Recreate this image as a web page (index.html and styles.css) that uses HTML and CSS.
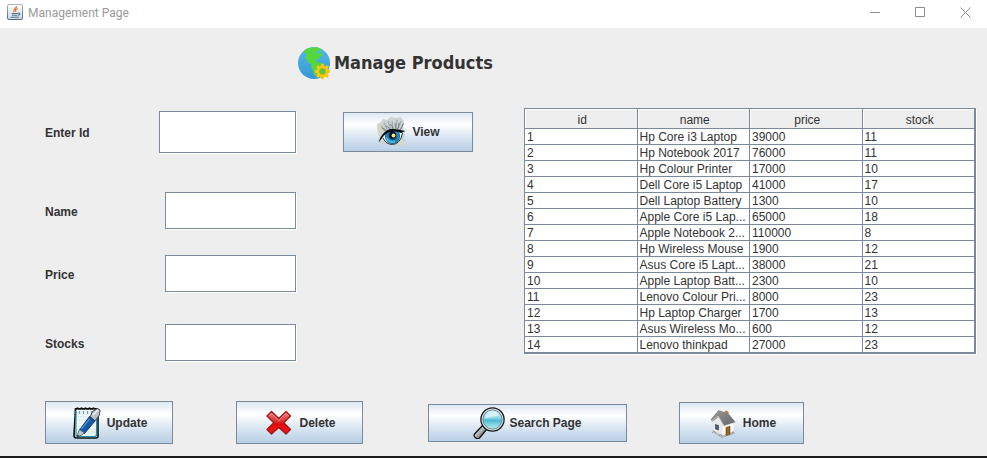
FILE: index.html
```html
<!DOCTYPE html>
<html lang="en">
<head>
<meta charset="utf-8">
<title>Management Page</title>
<link rel="stylesheet" href="styles.css">
</head>
<body>
<div class="window">
  <header class="titlebar">
    <svg class="app-icon" viewBox="0 0 16 16" aria-hidden="true">
      <defs>
        <linearGradient id="java-bg" x1="0" y1="0" x2="0" y2="1"><stop offset="0" stop-color="#fff"/><stop offset="1" stop-color="#cfd8e0"/></linearGradient>
        <linearGradient id="java-edge" x1="0" y1="0" x2="0" y2="1"><stop offset="0" stop-color="#a9b4bf"/><stop offset="1" stop-color="#4d6b82"/></linearGradient>
      </defs>
      <rect x="0.5" y="0.5" width="15" height="15" rx="1.5" fill="url(#java-bg)" stroke="url(#java-edge)"/>
      <path d="M9.500 2.200C10 4.500 5.500 5 7 8.300M10.500 4.500C8.500 5.500 8 6.500 9 8" fill="none" stroke="#e8762c" stroke-width="1.300"/>
      <path d="M4.500 9.500h6.500M5 11.200h5.500M3.500 13.200h8.500M11 9.300c2.500-.8 2.500 1.700 0 2" fill="none" stroke="#4f7695" stroke-width="1.100"/>
    </svg>
    <span class="titlebar-text">Management Page</span>
    <div class="window-controls">
      <button type="button" aria-label="Minimize"><svg viewBox="0 0 11 11"><path d="M0 5.500h10"/></svg></button>
      <button type="button" aria-label="Maximize"><svg viewBox="0 0 11 11"><path d="M.5 .5h9v9h-9z"/></svg></button>
      <button type="button" aria-label="Close"><svg viewBox="0 0 11 11"><path d="M.5 .5l10 10M10.500 .5l-10 10"/></svg></button>
    </div>
  </header>

  <h1 class="heading">
    <svg class="icon" viewBox="0 0 32 32" aria-hidden="true">
      <defs>
        <linearGradient id="sea" x1="0" y1="0" x2="0" y2="1"><stop offset="0" stop-color="#55b9e9"/><stop offset="1" stop-color="#3498d4"/></linearGradient>
      </defs>
      <circle cx="16" cy="16" r="16" fill="url(#sea)"/>
      <path d="M7 2.800C11 .4 17-.6 22 1.300l1.500 2.500-2.500.7 2.500 1.500 1.500 2.500-3 1.200-1.300 2.300-3 .8 1.300 2 4 1 2.500 3-1.500 3-2.500 3.500-2.500 3.700-3-1-1-4.500-2-3 .5-3.500-3.500-1.500-2.500-4.500 1-4-3-2.200z" fill="#54d63c"/>
      <path d="M19 3l3 3-2 1.500-2.500-2.500z" fill="#4bb9d6"/>
      <g fill="#f6c713">
        <circle cx="24.500" cy="24.500" r="5.900"/>
        <path d="M23 16.800h3v15.400h-3zM16.800 23v3h15.400v-3z"/>
        <path d="M23 16.800h3v15.400h-3zM16.800 23v3h15.400v-3z" transform="rotate(45 24.500 24.500)"/>
      </g>
      <circle cx="24.500" cy="24.500" r="3.400" fill="#e4a80c"/>
      <circle cx="24.500" cy="24.500" r="2.800" fill="#4dcc45"/>
    </svg>
    Manage Products
  </h1>

  <main class="content">
    <form class="form" id="product-form">
      <div class="field field-id"><label for="pid">Enter Id</label><input id="pid" type="text"></div>
      <div class="field field-name"><label for="pname">Name</label><input id="pname" type="text"></div>
      <div class="field field-price"><label for="price">Price</label><input id="price" type="text"></div>
      <div class="field field-stocks"><label for="stocks">Stocks</label><input id="stocks" type="text"></div>
    </form>

    <button type="button" class="btn btn-view">
      <svg class="icon" viewBox="0 0 32 32" aria-hidden="true">
        <defs>
          <radialGradient id="iris"><stop offset="0" stop-color="#092238"/><stop offset=".35" stop-color="#0c4569"/><stop offset=".8" stop-color="#2496cf"/><stop offset="1" stop-color="#124a70"/></radialGradient>
        </defs>
        <path d="M1 8l4-2 2-3 4 1 4-3 5 1 5-1 3 4-1 6 2 5-1 5 2 4-3 2 1 2-4 1-3-1-3 1-3-1-5-1-4 1-4-4 1-4-1-6z" fill="#ccd3d3"/>
        <path d="M1 9l4-2 2 3-1 6-4 2z" fill="#d6d6c0"/>
        <path d="M22 27l4-3 3 2-4 3z" fill="#dcdccc"/>
        <path d="M5 10l5 6M8 7l4 8M12 5l3 8M16 5l1 8M21 4l-1 9M25 5l-3 8M28 7l-4 7" stroke="#a3adae" stroke-width="1.200" fill="none"/>
        <path d="M6 12q4 1 5 4M10 10q4 1 4 5M14 8q3 2 3 6M19 7q1 4 0 7M23 7q0 4-2 7M27 8q-1 4-4 7" stroke="#6c7879" stroke-width=".9" fill="none"/>
        <path d="M5 25Q10 14 18 14q7 0 8.500 4-1.500 10-9.500 10.500-7 0-9-5z" fill="#eef2f2"/>
        <circle cx="16.500" cy="20.500" r="7.500" fill="url(#iris)"/>
        <path d="M11 22q2 5 8 3.500" stroke="#3eb3e2" stroke-width="2.500" fill="none"/>
        <circle cx="16.500" cy="19" r="3.500" fill="#06121c"/>
        <circle cx="17.500" cy="19.500" r="1.900" fill="#ffe27a"/>
        <path d="M2.500 26.500l2-5Q8 14.500 15 13l7 .5 7 1.500-4 2-5-1.500-5 .3q-6 1-9 6.500z" fill="#050808"/>
        <path d="M7 22q3 6.500 9.500 6.500Q24.500 28 26.500 17" stroke="#263337" stroke-width="1" fill="none"/>
      </svg>
      View
    </button>

    <table class="products">
      <thead>
        <tr><th scope="col">id</th><th scope="col">name</th><th scope="col">price</th><th scope="col">stock</th></tr>
      </thead>
      <tbody>
        <tr><td>1</td><td>Hp Core i3 Laptop</td><td>39000</td><td>11</td></tr>
        <tr><td>2</td><td>Hp Notebook 2017</td><td>76000</td><td>11</td></tr>
        <tr><td>3</td><td>Hp Colour Printer</td><td>17000</td><td>10</td></tr>
        <tr><td>4</td><td>Dell Core i5 Laptop</td><td>41000</td><td>17</td></tr>
        <tr><td>5</td><td>Dell Laptop Battery</td><td>1300</td><td>10</td></tr>
        <tr><td>6</td><td>Apple Core i5 Lap...</td><td>65000</td><td>18</td></tr>
        <tr><td>7</td><td>Apple Notebook 2...</td><td>110000</td><td>8</td></tr>
        <tr><td>8</td><td>Hp Wireless Mouse</td><td>1900</td><td>12</td></tr>
        <tr><td>9</td><td>Asus Core i5 Lapt...</td><td>38000</td><td>21</td></tr>
        <tr><td>10</td><td>Apple Laptop Batt...</td><td>2300</td><td>10</td></tr>
        <tr><td>11</td><td>Lenovo Colour Pri...</td><td>8000</td><td>23</td></tr>
        <tr><td>12</td><td>Hp Laptop Charger</td><td>1700</td><td>13</td></tr>
        <tr><td>13</td><td>Asus Wireless Mo...</td><td>600</td><td>12</td></tr>
        <tr><td>14</td><td>Lenovo thinkpad</td><td>27000</td><td>23</td></tr>
      </tbody>
    </table>
  </main>

  <footer class="actions">
    <button type="button" class="btn btn-update">
      <svg class="icon" viewBox="0 0 32 32" aria-hidden="true">
        <defs>
          <linearGradient id="paper" x1="0" y1="0" x2="0" y2="1"><stop offset="0" stop-color="#e4f1f5"/><stop offset=".5" stop-color="#fff"/><stop offset="1" stop-color="#dcecea"/></linearGradient>
        </defs>
        <path d="M4.500 1.800h21q1.500 0 1.500 2V29q0 2-2 2H5.500Q3 31 3 28.500z" fill="url(#paper)" stroke="#111" stroke-width="1.600"/>
        <path d="M5 4v23.500q0 2 2 2h16.500q2 0 2-2V5" fill="none" stroke="#1d93ac" stroke-width="1.200"/>
        <path d="M7 10h17M7 13h17M7 16h17M7 19h17M7 22h17M7 25h17" stroke="#c8dcdd" stroke-width=".7"/>
        <path d="M5 2.500q1.500-3 3 0M9 2.500q1.500-3 3 0M13 2.500q1.500-3 3 0M17 2.500q1.500-3 3 0M21 2.500q1.500-3 3 0" fill="none" stroke="#111" stroke-width="1.400"/>
        <path d="M8.500 4v3M12.500 4v3M16.500 4v3M20.500 4v3" stroke="#8d9ba0" stroke-width="1.200"/>
        <path d="M21.500 4.500l5-3 2.500 1.500-.5 5-4.500 6-5-4z" fill="#b9bfc5" stroke="#3a4046" stroke-width=".9"/>
        <path d="M22 8l5-5" stroke="#f3f5f7" stroke-width="1.500"/>
        <path d="M18.500 9.500l5.500 4.500-10.500 12.500-5-3.500z" fill="#1559a6" stroke="#0b2c5a" stroke-width=".9"/>
        <path d="M18.500 12l-8 10" stroke="#4b92d5" stroke-width="1.300"/>
        <path d="M8.500 22.500l5 3.500-3 2-4 2 .5-4z" fill="#c4cbd0" stroke="#4b5358" stroke-width=".8"/>
        <path d="M6 30l.8-2.200 1.400 1.200z" fill="#111"/>
      </svg>
      Update
    </button>
    <button type="button" class="btn btn-delete">
      <svg class="icon" viewBox="0 0 32 32" aria-hidden="true">
        <defs>
          <linearGradient id="cross" x1="0" y1="0" x2="0" y2="1"><stop offset="0" stop-color="#f08080"/><stop offset=".45" stop-color="#d92f2f"/><stop offset=".55" stop-color="#e10d0d"/><stop offset="1" stop-color="#f01616"/></linearGradient>
        </defs>
        <path d="M8.500 4.500L15.800 11.500 23 4.500 27.500 9 20.800 15.800 27.500 22.500 23 27 15.800 20.500 8.500 27 4 22.500 10.800 15.800 4 9z" fill="url(#cross)" stroke="#9c1717" stroke-width="1.300" stroke-linejoin="round"/>
        <path d="M6 9l2.500-2.500 7.300 7 7.200-7L25.500 9" fill="none" stroke="#f7a3a3" stroke-width=".7"/>
      </svg>
      Delete
    </button>
    <button type="button" class="btn btn-search">
      <svg class="icon" viewBox="0 0 32 32" aria-hidden="true">
        <defs>
          <linearGradient id="lens" x1="0" y1="0" x2="0" y2="1"><stop offset="0" stop-color="#d9f4fa"/><stop offset=".42" stop-color="#8ed6e7"/><stop offset=".55" stop-color="#4dbbd6"/><stop offset="1" stop-color="#bdf0f7"/></linearGradient>
          <linearGradient id="handle" x1="0" y1="0" x2="1" y2="1"><stop offset="0" stop-color="#222"/><stop offset=".4" stop-color="#c9cdd0"/><stop offset="1" stop-color="#222"/></linearGradient>
        </defs>
        <path d="M10 18l4 4-7.500 9q-2 1.500-4-.3-2.500-2-.7-4z" fill="url(#handle)" stroke="#111" stroke-width="1.300"/>
        <path d="M3 28l8-8" stroke="#aeb4b8" stroke-width="1.500"/>
        <path d="M10 18.500l3.500 3.500 2.500-3-3-3z" fill="#e2e5e7" stroke="#444" stroke-width=".8"/>
        <circle cx="19.500" cy="12.500" r="11.600" fill="#d5d9dc" stroke="#16191b" stroke-width="1.300"/>
        <circle cx="19.500" cy="12.500" r="9.500" fill="url(#lens)" stroke="#597b87" stroke-width=".8"/>
        <path d="M12 11.500a7.500 7.500 0 0 1 14-3q-6 1-14 3z" fill="#f0fbfd" opacity=".6"/>
      </svg>
      Search Page
    </button>
    <button type="button" class="btn btn-home">
      <svg class="icon" viewBox="0 0 32 32" aria-hidden="true">
        <defs>
          <linearGradient id="roof" x1="0" y1="0" x2="1" y2="1"><stop offset="0" stop-color="#9a9a9a"/><stop offset="1" stop-color="#626568"/></linearGradient>
        </defs>
        <path d="M5 25l10 6 12-4-1-3-11 4z" fill="#8e989b" opacity=".6"/>
        <path d="M17.500 4.500l2-1 2 1.500v6l-4-1z" fill="#c57b3a"/>
        <path d="M5 12l6-4 6 9-2 13-9.500-5.500z" fill="#e6e8eb"/>
        <path d="M16 17l10.500-2.500V26L15 30z" fill="#fafafa"/>
        <path d="M15 28.500L26.500 24.500V26L15 30zM5.500 23v1.500L15 30v-1.500z" fill="#b5babc"/>
        <path d="M11.500 3L21.500 6.500 28.500 15.300 17 19 11.500 10 5.500 14.500 3.500 12.800z" fill="url(#roof)"/>
        <path d="M4.500 14l6.500-5 6 10 11-3.500" stroke="#d8d8d8" stroke-width=".7" fill="none"/>
        <path d="M19 20.500l4-1.300v8l-4 1.300z" fill="#9a6121" stroke="#6a3f10" stroke-width=".6"/>
        <path d="M8.500 17.500l3 1v4.500l-3-1z" fill="#47617c" stroke="#303940" stroke-width=".6"/>
        <path d="M5 26l2-2 2 2.500M12 29l1.500-2 2 3M24.500 27l1.500-2.500 1.500 2" stroke="#82917d" stroke-width=".8" fill="none"/>
      </svg>
      Home
    </button>
  </footer>
</div>
</body>
</html>
```
FILE: styles.css
```css
* { box-sizing: border-box; }

body {
  margin: 0;
  background: #eee;
  color: #333;
  font: 12px/16px "Liberation Sans", Arial, sans-serif;
}

.window {
  display: flex;
  flex-direction: column;
  min-height: 100vh;
  border-bottom: 2px solid #1c1c1c;
}

/* Title bar */
.titlebar {
  display: flex;
  align-items: center;
  height: 28px;
  padding: 0 0 4px 7px;
  background: #fff;
}

.app-icon {
  width: 16px;
  height: 16px;
}

.titlebar-text {
  margin-left: 5px;
  padding-top: 2px;
  color: #999;
  font: 12px/16px Roboto, "Segoe UI", sans-serif;
}

.window-controls {
  display: flex;
  margin-left: auto;
}

.window-controls button {
  display: flex;
  justify-content: center;
  align-items: center;
  width: 45px;
  height: 24px;
  padding: 0 0 0 2px;
  border: 0;
  background: none;
}

.window-controls svg {
  width: 11px;
  height: 11px;
  fill: none;
  stroke: #8d8d8d;
}

/* Heading */
.heading {
  display: flex;
  align-items: center;
  gap: 4px;
  margin: 19px 0 29px 298px;
  font: bold 18px/32px "DejaVu Sans Condensed", Tahoma, sans-serif;
}

.icon {
  flex: none;
  width: 32px;
  height: 32px;
}

/* Form and table */
.content {
  display: flex;
  align-items: flex-start;
  padding: 0 11px 0 45px;
}

.form {
  flex: none;
  width: 251px;
  padding-top: 3px;
  font-weight: bold;
}

.field {
  display: flex;
  justify-content: space-between;
  align-items: center;
}

.field label {
  padding-top: 2px;
}

.field input {
  width: 131px;
  height: 37px;
  padding: 2px 4px;
  border: 1px solid #7a8a99;
  border-radius: 0;
  outline: 0;
  background: #fff;
  box-shadow: 1px 1px 0 #fff;
  color: inherit;
  font: inherit;
}

.field-id input {
  width: 137px;
  height: 42px;
}

.field-name { margin-top: 39px; }
.field-price { margin-top: 26px; }
.field-stocks { margin-top: 32px; }

.btn {
  display: flex;
  flex: none;
  justify-content: center;
  align-items: center;
  gap: 4px;
  padding: 0;
  border: 1px solid #7a8a99;
  background: linear-gradient(#dde8f3, #fff 30%, #dde8f3 60%, #b8cfe5);
  color: #333;
  font: bold 12px/16px "Liberation Sans", Arial, sans-serif;
}

.btn-view {
  width: 130px;
  height: 40px;
  margin: 4px 51px 0 47px;
}

.products {
  flex: 1;
  display: table;
  table-layout: fixed;
  border-collapse: separate;
  border-spacing: 0;
  width: 100%;
  border: 1px solid #7a8a99;
  background: #fff;
  box-shadow: 1px 1px 0 #fff;
}

.products th,
.products td {
  height: 16px;
  padding: 2px 0 0 2px;
  border: solid #7a8a99;
  border-width: 0 1px 1px 0;
  line-height: 13px;
  text-align: left;
  white-space: nowrap;
  overflow: hidden;
}

.products th {
  height: 20px;
  padding: 3px 0 0 3px;
  background: #eee;
  box-shadow: inset 1px 1px 0 #fff;
  font-weight: normal;
  text-align: center;
}

/* Bottom buttons */
.actions {
  display: flex;
  align-items: center;
  padding: 40px 0 12px 45px;
}

.btn-update {
  width: 128px;
  height: 43px;
}

.btn-delete {
  width: 127px;
  height: 43px;
  margin-left: 63px;
}

.btn-search {
  width: 199px;
  height: 38px;
  margin-left: 65px;
}

.btn-home {
  width: 125px;
  height: 42px;
  margin-left: 52px;
}
```
